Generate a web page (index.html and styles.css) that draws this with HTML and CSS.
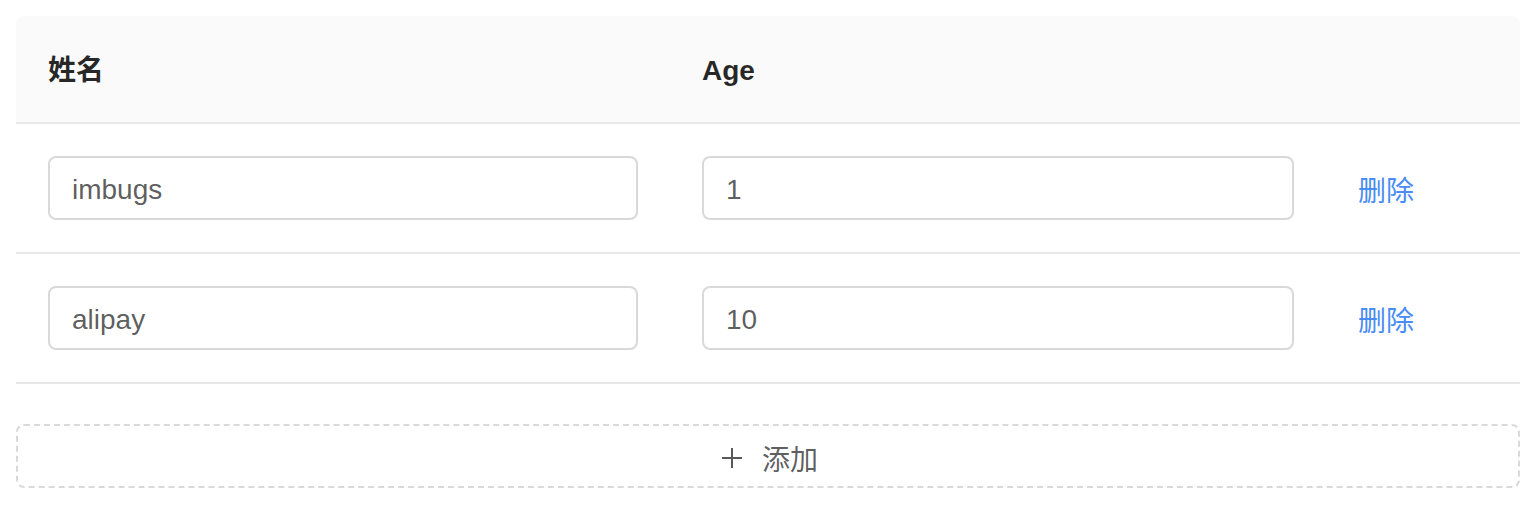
FILE: index.html
```html
<!DOCTYPE html>
<html>
<head>
<meta charset="utf-8">
<link rel="stylesheet" href="styles.css">
</head>
<body>
<div class="wrap">
  <table class="tbl">
    <colgroup>
      <col class="c1"><col class="c2"><col class="c3">
    </colgroup>
    <thead>
      <tr><th>姓名</th><th>Age</th><th></th></tr>
    </thead>
    <tbody>
      <tr>
        <td><input class="inp" value="imbugs"></td>
        <td><input class="inp" value="1"></td>
        <td><a class="link">删除</a></td>
      </tr>
      <tr>
        <td><input class="inp" value="alipay"></td>
        <td><input class="inp" value="10"></td>
        <td><a class="link">删除</a></td>
      </tr>
    </tbody>
  </table>
  <button class="add"><svg class="plus" width="20" height="20" viewBox="0 0 20 20"><path d="M10 0v20M0 10h20" stroke="currentColor" stroke-width="2" fill="none"/></svg><span>添加</span></button>
</div>
</body>
</html>
```

FILE: styles.css
```css
* { box-sizing: border-box; }
body {
  margin: 0;
  padding: 16px 12px 0 16px;
  font-family: "Liberation Sans", "Noto Sans CJK SC", sans-serif;
  font-size: 28px;
  color: rgba(0,0,0,0.65);
  background: #fff;
}
.wrap { width: 1504px; }
.tbl {
  width: 100%;
  border-collapse: separate;
  border-spacing: 0;
  table-layout: fixed;
}
.c1 { width: 654px; }
.c2 { width: 656px; }
.c3 { width: 194px; }
th {
  background: #fafafa;
  text-align: left;
  font-weight: 600;
  color: rgba(0,0,0,0.85);
  padding: 34px 32px 30px;
  line-height: 42px;
  height: 108px;
  border-bottom: 2px solid #e8e8e8;
}
th:first-child { border-top-left-radius: 8px; }
th:last-child { border-top-right-radius: 8px; }
td {
  padding: 32px;
  height: 130px;
  border-bottom: 2px solid #e8e8e8;
  vertical-align: middle;
}
.inp {
  display: block;
  width: 100%;
  height: 64px;
  border: 2px solid #d9d9d9;
  border-radius: 8px;
  padding: 10px 22px 6px;
  font-family: inherit;
  font-size: 28px;
  color: rgba(0,0,0,0.65);
  outline: none;
  background: #fff;
}
.link {
  display: inline-block;
  padding-top: 2px;
  color: #4a8cf5;
  cursor: pointer;
}
.add {
  display: flex;
  align-items: center;
  justify-content: center;
  gap: 20px;
  width: 100%;
  height: 64px;
  margin-top: 40px;
  border: 2px dashed #d9d9d9;
  border-radius: 8px;
  background: #fff;
  font-family: inherit;
  font-size: 28px;
  color: rgba(0,0,0,0.65);
  padding: 4px 0 0 4px;
}
.plus { display: block; }
```
